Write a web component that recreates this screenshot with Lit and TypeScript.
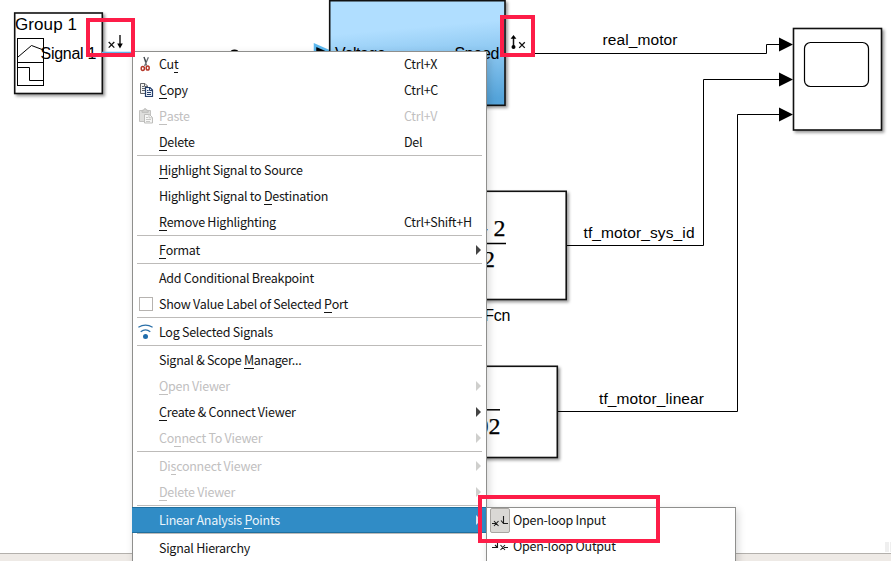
import { LitElement, html, css, svg, nothing } from "lit";
import { customElement, property } from "lit/decorators.js";

type Entry =
  | { sep: true }
  | {
      sep?: false;
      text: string;
      key?: number;
      shortcut?: string;
      icon?: string;
      off?: boolean;
      sub?: boolean;
      active?: boolean;
    };

const SEP: Entry = { sep: true };

// `key` is the index of the mnemonic letter in the label.
const ENTRIES: Entry[] = [
  { text: "Cut", key: 2, shortcut: "Ctrl+X", icon: "cut" },
  { text: "Copy", key: 0, shortcut: "Ctrl+C", icon: "copy" },
  { text: "Paste", key: 0, shortcut: "Ctrl+V", icon: "paste", off: true },
  { text: "Delete", key: 0, shortcut: "Del" },
  SEP,
  { text: "Highlight Signal to Source", key: 0 },
  { text: "Highlight Signal to Destination", key: 20 },
  { text: "Remove Highlighting", key: 0, shortcut: "Ctrl+Shift+H" },
  SEP,
  { text: "Format", key: 0, sub: true },
  SEP,
  { text: "Add Conditional Breakpoint" },
  { text: "Show Value Label of Selected Port", key: 29, icon: "check" },
  SEP,
  { text: "Log Selected Signals", icon: "log" },
  SEP,
  { text: "Signal & Scope Manager...", key: 15 },
  { text: "Open Viewer", key: 0, off: true, sub: true },
  { text: "Create & Connect Viewer", key: 0, sub: true },
  { text: "Connect To Viewer", key: 2, off: true, sub: true },
  SEP,
  { text: "Disconnect Viewer", key: 2, off: true, sub: true },
  { text: "Delete Viewer", key: 0, off: true, sub: true },
  SEP,
  { text: "Linear Analysis Points", key: 16, sub: true, active: true },
  SEP,
  { text: "Signal Hierarchy" },
];

const ICONS: Record<string, unknown> = {
  cut: svg`
    <path d="M6 1 L8.600 9.500 M10.400 1.200 L6.600 10" stroke="#6b7076" stroke-width="1.300" fill="none"/>
    <path d="M6 1 L8 6" stroke="#3e4348" stroke-width="1" fill="none"/>
    <ellipse cx="4.800" cy="12.600" rx="1.600" ry="2" fill="none" stroke="#b5382a" stroke-width="1.500"/>
    <ellipse cx="9.700" cy="12" rx="1.500" ry="2.100" fill="none" stroke="#b5382a" stroke-width="1.500"/>`,
  copy: svg`
    <path d="M2.500 1.500h4.500l2.500 2.500v7.500h-7z" fill="#f4f4f2" stroke="#64666a"/>
    <path d="M6.500 1.500v3h3M4 4.500h2M4 6.500h4M4 8.500h3" fill="none" stroke="#64666a"/>
    <path d="M7.500 5.500h4.500l2.500 2.500v6.500h-7z" fill="#eef3fa" stroke="#253f6c" stroke-width="1.2"/>
    <path d="M11.500 5.500v3h3M9 8.500h1.500M9 10.500h4M9 12.500h4" fill="none" stroke="#253f6c"/>`,
  paste: svg`
    <path d="M1.500 2.500h11v11h-11z" fill="#dededc" stroke="#c2c2c0"/>
    <path d="M4 4.300v-2h1.500l.8-1.500h1.600l.8 1.500h1.500v2z" fill="#d2d2d0" stroke="#bcbcba"/>
    <path d="M6.500 6.500h5l3 3v5.500h-8z" fill="#f7f7f6" stroke="#bdbdbb"/>
    <path d="M11 6.500v3.300h3.300M8 9.500h2M8 11.500h5M8 13.500h4" fill="none" stroke="#c8c8c6"/>`,
  check: svg`<rect x="1.500" y="1.500" width="13" height="13" fill="#fff" stroke="#b6b3b0"/>`,
  log: svg`
    <path d="M.4 3.300Q7.500-1 14.600 3.300" fill="none" stroke="#2a6fa8" stroke-width="1.200"/>
    <path d="M2.700 7.800Q7.500 3.800 12.300 7.800" fill="none" stroke="#2a6fa8" stroke-width="1.200"/>
    <circle cx="7.500" cy="12.400" r="2.500" fill="#1f6cab"/>`,
};

@customElement("menu-row")
class MenuRow extends LitElement {
  @property({ attribute: false }) entry: any;

  static styles = css`
    :host {
      display: block;
    }
    .sep {
      height: 1px;
      margin: 0 4px 1px;
      background: #bdbbb9;
    }
    .row {
      box-sizing: border-box;
      height: 26px;
      display: grid;
      grid-template-columns: 21px 245px 1fr 6px;
      align-items: center;
      padding: 0 4px 0 5px;
      color: #141414;
      white-space: pre;
    }
    .off {
      color: #c1c0bf;
    }
    .active {
      background: #308cc6;
      box-shadow: inset 0 1px #1f6f9f, inset 0 -1px #1f6f9f;
      color: #eaf4fb;
      margin-left: -1px;
      padding-left: 6px;
    }
    .label {
      line-height: 26px;
    }
    .key {
      box-shadow: 0 1px currentColor;
      display: inline-block;
      line-height: 16px;
    }
    .icon {
      width: 16px;
      height: 16px;
      display: block;
    }
    .arrow {
      width: 5px;
      height: 10px;
      fill: #444;
    }
    .off .arrow {
      fill: #cfcfcd;
    }
    .active .arrow {
      fill: #d5e7f3;
    }
  `;

  render() {
    const e = this.entry;
    if (e.sep) return html`<div class="sep"></div>`;
    const k = e.key;
    const label =
      k === undefined
        ? e.text
        : html`${e.text.slice(0, k)}<span class="key">${e.text[k]}</span>${e.text.slice(k + 1)}`;
    return html`<div class="row ${e.off ? "off" : ""} ${e.active ? "active" : ""}">
      <span>${e.icon ? html`<svg class="icon" viewBox="0 0 16 16">${ICONS[e.icon]}</svg>` : nothing}</span>
      <span class="label">${label}</span>
      <span class="label">${e.shortcut ?? ""}</span>
      ${e.sub
        ? html`<svg class="arrow" viewBox="0 0 5 10"><path d="M0 0L5 5L0 10z" /></svg>`
        : html`<span></span>`}
    </div>`;
  }
}

@customElement("model-canvas")
class ModelCanvas extends LitElement {
  static styles = css`
    :host {
      display: block;
    }
    .canvas {
      display: block;
      width: 891px;
      height: 561px;
      font-family: "Liberation Sans", Arial, sans-serif;
      font-size: 16px;
      letter-spacing: 0;
    }
    .block {
      fill: #fff;
      stroke: #111;
      stroke-width: 1.6;
      filter: drop-shadow(2px 2px 1.5px rgba(0, 0, 0, 0.4));
    }
    .plant {
      fill: url(#plant);
    }
    .wire {
      fill: none;
      stroke: #000;
      stroke-width: 1;
    }
    .signal {
      font-size: 15.5px;
    }
    .math {
      font-family: "Liberation Serif", "Times New Roman", serif;
      font-size: 24px;
      stroke: #000;
      stroke-width: 0.25;
    }
  `;

  render() {
    return html`<svg class="canvas" viewBox="0 0 891 561">
      <defs>
        <linearGradient id="plant" x1="0.35" y1="0" x2="0.5" y2="1">
          <stop offset="0.27" stop-color="#b0deff" />
          <stop offset="1" stop-color="#55a4da" />
        </linearGradient>
      </defs>

      <rect class="block" x="14.700" y="13" width="87.600" height="80.500" />
      <text x="15" y="30" font-size="17" textLength="62">Group 1</text>
      <rect class="wire" x="17.500" y="38.500" width="26" height="47" />
      <path class="wire" d="M17.500 62.500H43.500M18 57L31.500 45.500L43.500 50M18 67.500H29.500V80.500H43.500" />
      <text x="40.500" y="58.500" textLength="56">Signal 1</text>
      <path d="M102 52.500H136" stroke="#5db4ea" stroke-width="1.500" />
      <path d="M108.700 42L114.300 47.600M114.300 42L108.700 47.600" stroke="#111" stroke-width="1.300" />
      <path d="M120 35V46" stroke="#111" stroke-width="1.400" />
      <path d="M117.200 43.500H122.800L120 48.500Z" />

      <ellipse cx="234.500" cy="52" rx="4" ry="2.500" />
      <path d="M315 45L330 51.500V57H315Z" stroke="#5db8ee" stroke-width="2.500" />

      <rect class="block plant" x="329.700" y=".7" width="175.300" height="104.600" />
      <text x="335" y="59" textLength="51">Voltage</text>
      <text x="454.500" y="59" textLength="45">Speed</text>
      <path d="M513.500 37V47" stroke="#111" stroke-width="1.500" />
      <path d="M510.600 38.800L513.500 35L516.400 38.800Z" />
      <circle cx="513.500" cy="47" r="2" />
      <path d="M519.200 42.300L524.800 47.900M524.800 42.300L519.200 47.900" stroke="#111" stroke-width="1.300" />

      <path class="wire" d="M505 53.500H766.500V44.500H780" />
      <path class="wire" d="M566 245.500H703.500V79.500H780" />
      <path class="wire" d="M557 411.500H737.500V114.500H780" />
      <path d="M779 37.500L793 44.500L779 51.500ZM779 72.500L793 79.500L779 86.500ZM779 107.500L793 114.500L779 121.500Z" />
      <text class="signal" x="602.500" y="45" textLength="75">real_motor</text>
      <text class="signal" x="583.500" y="238" textLength="111">tf_motor_sys_id</text>
      <text class="signal" x="599" y="404" textLength="105">tf_motor_linear</text>

      <rect class="block" x="793.500" y="28.500" width="88" height="101.500" />
      <rect x="804.500" y="42.500" width="64" height="44" rx="6" fill="none" stroke="#000" stroke-width="1.200" />

      <rect class="block" x="440" y="191.300" width="126.200" height="108.200" />
      <text class="math" x="474.800" y="237">+</text>
      <text class="math" x="493.500" y="236">2</text>
      <path d="M470 243.500H506" stroke="#000" stroke-width="1.500" />
      <text class="math" x="483" y="267">2</text>
      <text x="484.300" y="321" textLength="26">Fcn</text>

      <rect class="block" x="440" y="366.300" width="117.300" height="91.200" />
      <path d="M470 409.800H500" stroke="#000" stroke-width="1.500" />
      <text class="math" x="476.500" y="434">02</text>

      <rect x="885" y="542" width="4" height="10" fill="#efefef" />
      <rect x="890" y="542" width="1" height="10" fill="#efefef" />
      <rect x="0" y="553" width="891" height="8" fill="#eeeae6" />
      <rect x="0" y="553" width="891" height="1" fill="#b3b0ac" />
    </svg>`;
  }
}

@customElement("app-root")
class AppRoot extends LitElement {
  static styles = css`
    :host {
      display: block;
      position: relative;
      width: 891px;
      height: 561px;
      overflow: hidden;
      background: #fff;
      font: 12.5px "Noto Sans CJK SC", sans-serif;
      letter-spacing: -0.26px;
    }
    .menu {
      position: absolute;
      box-sizing: border-box;
      background: #fff;
      border: 1px solid #8f8f8d;
      box-shadow: 2px 3px 8px rgba(0, 0, 0, 0.16);
    }
    .context {
      left: 132px;
      top: 51px;
      width: 355px;
      height: 530px;
    }
    .context menu-row:first-child {
      margin-top: -1px;
    }
    .flyout {
      left: 486px;
      top: 507px;
      width: 250px;
      height: 80px;
      color: #141414;
    }
    .option {
      height: 26px;
      display: flex;
      align-items: center;
      gap: 3px;
      padding-left: 3px;
      line-height: 26px;
    }
    .option:first-child {
      margin-top: -1px;
    }
    .glyph {
      box-sizing: border-box;
      width: 20px;
      height: 25px;
      border: 1px solid transparent;
      border-radius: 2px;
    }
    .on {
      background: #dad8d5;
      border-color: #a9a6a2;
    }
    .drawing {
      display: block;
      width: 18px;
      height: 23px;
      fill: none;
      stroke: #1c1c1c;
      stroke-width: 1.1;
    }
    .mark {
      position: absolute;
      box-sizing: border-box;
      border: 4px solid #fd1d48;
    }
    .mark-in {
      left: 86px;
      top: 18px;
      width: 49px;
      height: 39px;
    }
    .mark-out {
      left: 500px;
      top: 15px;
      width: 35px;
      height: 42px;
    }
    .mark-item {
      left: 478px;
      top: 495px;
      width: 182px;
      height: 48px;
    }
  `;

  render() {
    return html`
      <model-canvas></model-canvas>
      <div class="menu context">${ENTRIES.map((e) => html`<menu-row .entry=${e}></menu-row>`)}</div>
      <div class="menu flyout">
        <div class="option">
          <div class="glyph on">
            <svg class="drawing" viewBox="0 0 18 23">
              <path d="M1 14.500H5M3 12L7.500 17M7.500 12L3 17M12.500 7V14.500H17M10 11.500L12.500 14.500" />
            </svg>
          </div>
          <span>Open-loop Input</span>
        </div>
        <div class="option">
          <div class="glyph">
            <svg class="drawing" viewBox="0 0 18 23">
              <path d="M1 12.500H6.500V6M4 10L6.500 12.500M13 12.500H17M9.500 10L14 15M14 10L9.500 15" />
            </svg>
          </div>
          <span>Open-loop Output</span>
        </div>
      </div>
      <div class="mark mark-in"></div>
      <div class="mark mark-out"></div>
      <div class="mark mark-item"></div>
    `;
  }
}
